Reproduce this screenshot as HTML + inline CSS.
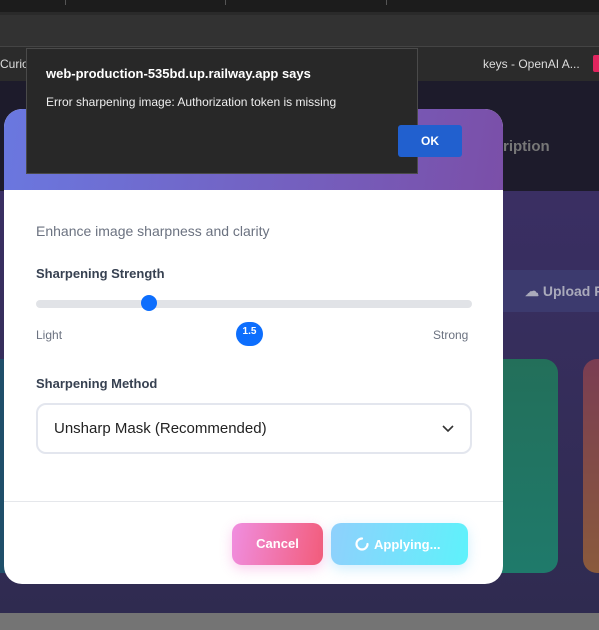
<!DOCTYPE html>
<html><head><style>
*{margin:0;padding:0;box-sizing:border-box}
body{width:599px;height:630px;overflow:hidden;position:relative;font-family:"Liberation Sans",sans-serif;background:#2d2a4e}
.a{position:absolute;white-space:nowrap}
</style></head><body>
<div class="a" style="left:0;top:0;width:599px;height:12px;background:#1c1c1c"></div>
<div class="a" style="left:65px;top:0;width:1px;height:5px;background:#555"></div>
<div class="a" style="left:225px;top:0;width:1px;height:5px;background:#555"></div>
<div class="a" style="left:386px;top:0;width:1px;height:5px;background:#555"></div>
<div class="a" style="left:0;top:12px;width:599px;height:34px;background:#323232;border-top:3px solid #2a2a2a"></div>
<div class="a" style="left:0;top:46px;width:599px;height:35px;background:#2b2b2b;border-top:1px solid #444"></div>
<div class="a" style="left:0;top:57px;color:#ddd;font-size:12px">Curio</div>
<div class="a" style="left:483px;top:57px;color:#ddd;font-size:12px">keys - OpenAI A...</div>
<div class="a" style="left:593px;top:55px;width:8px;height:17px;background:#e0245e;border-radius:2px"></div>
<div class="a" style="left:0;top:81px;width:599px;height:110px;background:#1d1b2b"></div>
<div class="a" style="left:503px;top:138px;color:#777;font-size:15px;font-weight:bold">ription</div>
<div class="a" style="left:0;top:191px;width:599px;height:422px;background:linear-gradient(180deg,#3a2f63,#2f2b50)"></div>
<div class="a" style="left:470px;top:270px;width:140px;height:42px;background:#3c3a6e;border-radius:8px"></div>
<div class="a" style="left:525px;top:283px;color:#aab;font-size:14px;font-weight:bold">☁ Upload F</div>
<div class="a" style="left:0;top:359px;width:30px;height:214px;background:#1f4f6a"></div>
<div class="a" style="left:470px;top:359px;width:88px;height:214px;background:linear-gradient(180deg,#236f5a,#1f7a6b);border-radius:0 14px 14px 0"></div>
<div class="a" style="left:583px;top:359px;width:30px;height:214px;background:linear-gradient(180deg,#7a3d52,#8a5a3c);border-radius:14px 0 0 14px"></div>
<div class="a" style="left:0;top:613px;width:599px;height:17px;background:#747474"></div>

<div class="a" style="left:4px;top:109px;width:499px;height:475px;background:#fff;border-radius:18px;overflow:hidden">
 <div style="height:81px;background:linear-gradient(100deg,#6a78e0,#7b4fa8)"></div>
 <div class="a" style="left:32px;top:114px;color:#6b7280;font-size:14px">Enhance image sharpness and clarity</div>
 <div class="a" style="left:32px;top:157px;color:#374151;font-size:13px;font-weight:bold">Sharpening Strength</div>
 <div class="a" style="left:32px;top:191px;width:436px;height:8px;background:#e1e3e7;border-radius:4px"></div>
 <div class="a" style="left:137px;top:186px;width:16px;height:16px;background:#0d6efd;border-radius:50%"></div>
 <div class="a" style="left:32px;top:219px;color:#6b7280;font-size:12px">Light</div>
 <div class="a" style="left:429px;top:219px;color:#6b7280;font-size:12px">Strong</div>
 <div class="a" style="left:232px;top:213px;width:27px;height:24px;background:#0d6efd;border-radius:12px;color:#fff;font-size:10px;font-weight:bold;text-align:center;line-height:20px">1.5</div>
 <div class="a" style="left:32px;top:267px;color:#374151;font-size:13px;font-weight:bold">Sharpening Method</div>
 <div class="a" style="left:32px;top:294px;width:436px;height:51px;border:2px solid #e3e6ee;border-radius:10px"></div>
 <div class="a" style="left:50px;top:311px;color:#222;font-size:15px">Unsharp Mask (Recommended)</div>
 <svg class="a" style="left:438px;top:314px" width="12" height="10"><path d="M1 3l5 5 5-5" fill="none" stroke="#333" stroke-width="1.6"/></svg>
 <div class="a" style="left:0;top:392px;width:499px;height:1px;background:#e5e7eb"></div>
 <div class="a" style="left:228px;top:414px;width:91px;height:42px;border-radius:10px;background:linear-gradient(100deg,#f08ee0,#f25c7a);box-shadow:0 4px 12px rgba(240,100,200,.3);color:#fff;font-weight:bold;font-size:13px;text-align:center;line-height:42px">Cancel</div>
 <div class="a" style="left:327px;top:414px;width:137px;height:42px;border-radius:10px;background:linear-gradient(100deg,#8fd0fc,#5ef2fb);box-shadow:0 4px 12px rgba(100,200,250,.3)"></div>
 <svg class="a" style="left:350px;top:427px" width="16" height="16"><path d="M8 2.5A5.5 5.5 0 1 0 13.5 8" fill="none" stroke="#fff" stroke-width="2.2" stroke-linecap="round"/></svg>
 <div class="a" style="left:370px;top:428px;color:#fff;font-weight:bold;font-size:13px">Applying...</div>
</div>

<div class="a" style="left:26px;top:48px;width:392px;height:126px;background:#282828;border:1px solid #4a4a4a">
 <div class="a" style="left:19px;top:17px;color:#fff;font-size:13px;font-weight:bold">web-production-535bd.up.railway.app says</div>
 <div class="a" style="left:19px;top:46px;color:#eee;font-size:12px">Error sharpening image: Authorization token is missing</div>
</div>
<div class="a" style="left:398px;top:125px;width:64px;height:32px;background:#2160cf;border-radius:3px;color:#fff;font-size:12px;font-weight:bold;text-align:center;line-height:32px">OK</div>
</body></html>
